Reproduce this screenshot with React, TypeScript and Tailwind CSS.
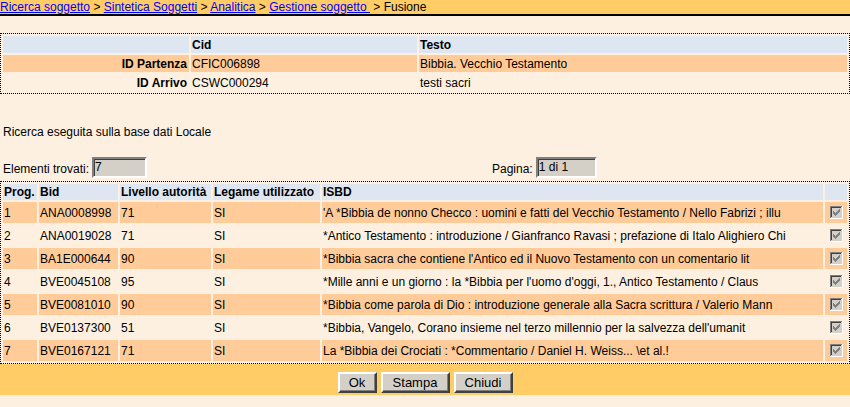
const risultati = [
  { prog: "1", bid: "ANA0008998", livello: "71", legame: "SI", isbd: "'A *Bibbia de nonno Checco : uomini e fatti del Vecchio Testamento / Nello Fabrizi ; illu" },
  { prog: "2", bid: "ANA0019028", livello: "71", legame: "SI", isbd: "*Antico Testamento : introduzione / Gianfranco Ravasi ; prefazione di Italo Alighiero Chi" },
  { prog: "3", bid: "BA1E000644", livello: "90", legame: "SI", isbd: "*Bibbia sacra che contiene l'Antico ed il Nuovo Testamento con un comentario lit" },
  { prog: "4", bid: "BVE0045108", livello: "95", legame: "SI", isbd: "*Mille anni e un giorno : la *Bibbia per l'uomo d'oggi, 1., Antico Testamento / Claus" },
  { prog: "5", bid: "BVE0081010", livello: "90", legame: "SI", isbd: "*Bibbia come parola di Dio : introduzione generale alla Sacra scrittura / Valerio Mann" },
  { prog: "6", bid: "BVE0137300", livello: "51", legame: "SI", isbd: "*Bibbia, Vangelo, Corano insieme nel terzo millennio per la salvezza dell'umanit" },
  { prog: "7", bid: "BVE0167121", livello: "71", legame: "SI", isbd: "La *Bibbia dei Crociati : *Commentario / Daniel H. Weiss... \\et al.!" },
];

// pixel check of the classic disabled checkbox
const checkPixels = [
  [9, 3], [8, 4], [9, 4], [3, 5], [7, 5], [8, 5], [9, 5],
  [3, 6], [4, 6], [6, 6], [7, 6], [8, 6],
  [3, 7], [4, 7], [5, 7], [6, 7], [7, 7],
  [4, 8], [5, 8], [6, 8], [5, 9],
];

const CheckboxDisabled = () => (
  <svg width="13" height="13" viewBox="0 0 13 13" shapeRendering="crispEdges" className="block">
    <rect x="0" y="0" width="13" height="13" fill="#ffffff" />
    <rect x="0" y="0" width="12" height="12" fill="#808080" />
    <rect x="1" y="1" width="11" height="11" fill="#d4d0c8" />
    <rect x="1" y="1" width="10" height="10" fill="#404040" />
    <rect x="2" y="2" width="9" height="9" fill="#d4d0c8" />
    {checkPixels.map(([x, y]) => (
      <rect key={`${x}-${y}`} x={x} y={y} width="1" height="1" fill="#808080" />
    ))}
  </svg>
);

const Sep = () => <span className="text-black"> &gt; </span>;

const ReadOnlyInput = ({ value, width }: { value: string; width: string }) => (
  <div
    className={`${width} h-[21px] border-2 border-t-[#808080] border-l-[#808080] border-b-white border-r-white bg-[#d4d0c8] pl-[1px] text-[12px] leading-[17px] text-black shadow-[inset_1px_1px_0_#404040]`}
  >
    {value}
  </div>
);

const Bottone = ({ label, width }: { label: string; width: string }) => (
  <button
    className={`${width} h-[21px] border-2 border-t-white border-l-white border-b-[#404040] border-r-[#404040] bg-[#d4d0c8] text-[13px] leading-[17px] text-black shadow-[inset_-1px_-1px_0_#808080]`}
  >
    {label}
  </button>
);

export default function App() {
  return (
    <div className="min-h-[407px] w-[850px] bg-[#fdf0e0] font-['Liberation_Sans',Arial,sans-serif] text-[12px] leading-[14px] text-black">
      {/* breadcrumb */}
      <div className="h-[14px] bg-[#ffcc66] leading-[14px] whitespace-nowrap">
        <a className="text-[#0000ff] underline">Ricerca soggetto</a>
        <Sep />
        <a className="text-[#0000ff] underline">Sintetica Soggetti</a>
        <Sep />
        <a className="text-[#0000ff] underline">Analitica</a>
        <Sep />
        <a className="text-[#0000ff] underline">Gestione soggetto&nbsp;</a>
        <Sep />
        <span>Fusione</span>
      </div>
      <div className="h-[2px] bg-black" />

      {/* confronto */}
      <table className="mt-[17px] w-full table-fixed border-separate border-spacing-[2px] border border-dotted border-black">
        <colgroup>
          <col className="w-[186px]" />
          <col className="w-[226px]" />
          <col />
        </colgroup>
        <tbody>
          <tr className="h-[17px] bg-[#dee7f1] font-bold">
            <td />
            <td className="pl-[1px]">Cid</td>
            <td className="pl-[1px]">Testo</td>
          </tr>
          <tr className="h-[17px] bg-[#ffcc99]">
            <td className="pr-[2px] text-right font-bold">ID Partenza</td>
            <td className="pl-[1px]">CFIC006898</td>
            <td className="pl-[1px]">Bibbia. Vecchio Testamento</td>
          </tr>
          <tr className="h-[17px]">
            <td className="pr-[2px] text-right font-bold">ID Arrivo</td>
            <td className="pl-[1px]">CSWC000294</td>
            <td className="pl-[1px]">testi sacri</td>
          </tr>
        </tbody>
      </table>

      <p className="mt-[31px] pl-[3px] leading-[14px]">Ricerca eseguita sulla base dati Locale</p>

      <div className="mt-[18px] flex items-center pl-[3px]">
        <div className="flex w-[489px] items-center gap-[3px]">
          <span className="pt-[2px]">Elementi trovati:</span>
          <ReadOnlyInput value="7" width="w-[55px]" />
        </div>
        <div className="flex items-center gap-[3px]">
          <span className="pt-[2px]">Pagina:</span>
          <ReadOnlyInput value="1 di 1" width="w-[61px]" />
        </div>
      </div>

      {/* elenco */}
      <table className="mt-[3px] w-full table-fixed border-separate border-spacing-[2px] border border-dotted border-black">
        <colgroup>
          <col className="w-[34px]" />
          <col className="w-[79px]" />
          <col className="w-[91px]" />
          <col className="w-[107px]" />
          <col />
          <col className="w-[22px]" />
        </colgroup>
        <tbody>
          <tr className="h-[16px] bg-[#dee7f1] font-bold">
            <td className="pl-[1px]">Prog.</td>
            <td className="pl-[1px]">Bid</td>
            <td className="pl-[1px]">Livello autorità</td>
            <td className="pl-[1px]">Legame utilizzato</td>
            <td className="pl-[1px]">ISBD</td>
            <td />
          </tr>
          {risultati.map((r, i) => (
            <tr key={r.prog} className={i % 2 === 0 ? "h-[21px] bg-[#ffcc99]" : "h-[21px]"}>
              <td className="pl-[1px]">{r.prog}</td>
              <td className="pl-[1px]">{r.bid}</td>
              <td className="pl-[1px]">{r.livello}</td>
              <td className="pl-[1px]">{r.legame}</td>
              <td className="overflow-hidden whitespace-nowrap pl-[1px]">{r.isbd}</td>
              <td>
                <div className="flex justify-center">
                  <CheckboxDisabled />
                </div>
              </td>
            </tr>
          ))}
        </tbody>
      </table>

      <div className="flex h-[31px] justify-center gap-[4px] bg-[#ffcc66] pt-[8px]">
        <Bottone label="Ok" width="w-[39px]" />
        <Bottone label="Stampa" width="w-[69px]" />
        <Bottone label="Chiudi" width="w-[59px]" />
      </div>
    </div>
  );
}
